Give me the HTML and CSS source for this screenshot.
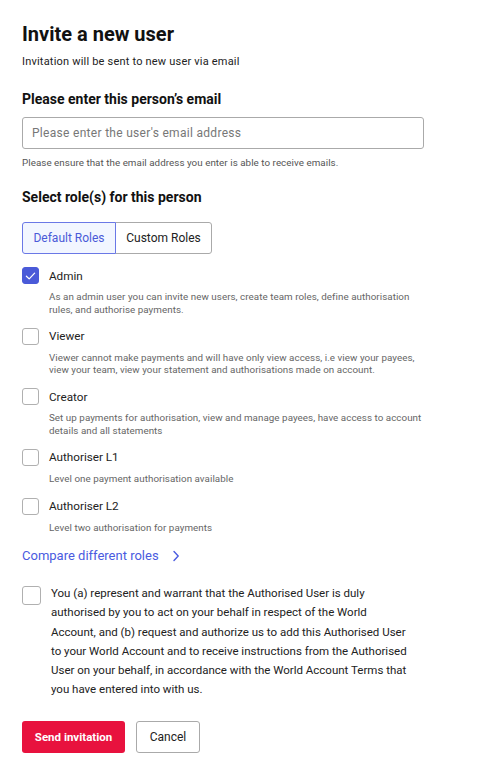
FILE: index.html
```html
<!DOCTYPE html>
<html>
<head>
<meta charset="utf-8">
<link rel="stylesheet" href="styles.css">
</head>
<body>
<main class="page">
  <h1 class="title">Invite a new user</h1>
  <p class="subtitle">Invitation will be sent to new user via email</p>

  <h2 class="section-label">Please enter this person’s email</h2>
  <div class="input-box"><span class="placeholder">Please enter the user's email address</span></div>
  <p class="helper">Please ensure that the email address you enter is able to receive emails.</p>

  <h2 class="section-label roles-label">Select role(s) for this person</h2>
  <div class="tabs">
    <div class="tab tab-active">Default Roles</div>
    <div class="tab">Custom Roles</div>
  </div>

  <ul class="roles">
    <li class="role">
      <div class="role-head">
        <span class="check checked"><svg viewBox="0 0 16 16" width="16" height="16"><path d="M3.6 8.2 L6.6 11.1 L12.4 5" fill="none" stroke="#fff" stroke-width="1.3" stroke-linecap="round" stroke-linejoin="round"/></svg></span>
        <span class="role-name">Admin</span>
      </div>
      <p class="role-desc">As an admin user you can invite new users, create team roles, define authorisation rules, and authorise payments.</p>
    </li>
    <li class="role">
      <div class="role-head"><span class="check"></span><span class="role-name">Viewer</span></div>
      <p class="role-desc">Viewer cannot make payments and will have only view access, i.e view your payees, view your team, view your statement and authorisations made on account.</p>
    </li>
    <li class="role">
      <div class="role-head"><span class="check"></span><span class="role-name">Creator</span></div>
      <p class="role-desc">Set up payments for authorisation, view and manage payees, have access to account details and all statements</p>
    </li>
    <li class="role">
      <div class="role-head"><span class="check"></span><span class="role-name">Authoriser L1</span></div>
      <p class="role-desc">Level one payment authorisation available</p>
    </li>
    <li class="role">
      <div class="role-head"><span class="check"></span><span class="role-name">Authoriser L2</span></div>
      <p class="role-desc">Level two authorisation for payments</p>
    </li>
  </ul>

  <a class="compare" href="#">Compare different roles <svg class="chev" viewBox="0 0 10 12" width="10" height="12"><path d="M3 1.5 L7.2 6 L3 10.5" fill="none" stroke="#4a5be0" stroke-width="1.4" stroke-linecap="round" stroke-linejoin="round"/></svg></a>

  <div class="consent">
    <span class="check big"></span>
    <p class="consent-text">You (a) represent and warrant that the Authorised User is duly authorised by you to act on your behalf in respect of the World Account, and (b) request and authorize us to add this Authorised User to your World Account and to receive instructions from the Authorised User on your behalf, in accordance with the World Account Terms that you have entered into with us.</p>
  </div>

  <div class="actions">
    <button class="btn btn-primary">Send invitation</button>
    <button class="btn btn-secondary">Cancel</button>
  </div>
</main>
</body>
</html>
```
FILE: styles.css
```css
* { box-sizing: border-box; }
html, body { margin: 0; padding: 0; background: #fff; }
body { font-family: Roboto, "Liberation Sans", sans-serif; color: #1a1a1a; }
.page { width: 504px; padding: 20px 22px 0 22px; }
.title { font-size: 20px; font-weight: 700; line-height: 28px; margin: 0; color: #111; }
.subtitle { font-size: 11px; line-height: 14px; margin: 7px 0 0 0; color: #222; letter-spacing: 0.2px; }
.section-label { font-size: 14px; font-weight: 700; line-height: 18px; margin: 21px 0 0 0; color: #111; }
.roles-label { margin-top: 19px; }
.input-box { width: 402px; height: 32px; border: 1px solid #aaa; border-radius: 3px; margin-top: 9px; display: flex; align-items: center; padding-left: 9px; }
.placeholder { font-size: 12px; letter-spacing: 0.3px; color: #777; }
.helper { font-size: 9.8px; line-height: 12px; color: #555; margin: 8px 0 0 0; letter-spacing: 0.05px; }
.tabs { display: flex; margin-top: 16px; }
.tab { height: 32px; display: flex; align-items: center; justify-content: center; font-size: 12px; border: 1px solid #aaa; color: #222; }
.tab-active { width: 94px; background: #f2f6ff; border-color: #6a78e6; color: #4a5ad8; border-radius: 3px 0 0 3px; position: relative; z-index: 1; }
.tab + .tab { width: 97px; margin-left: -1px; border-radius: 0 3px 3px 0; }
.roles { list-style: none; margin: 13px 0 0 0; padding: 0; }
.role { margin-bottom: 11.5px; }
.role:nth-child(n+4) { margin-bottom: 12.5px; }
.role:last-child { margin-bottom: 11px; }
.role-head { display: flex; align-items: center; gap: 10px; height: 17px; }
.check { width: 17px; height: 17px; border: 1px solid #b0b0b0; border-radius: 3px; flex: none; display: flex; align-items: center; justify-content: center; background: #fff; }
.check.checked { background: #4a5ad8; border-color: #4a5ad8; }
.role-name { font-size: 11.7px; color: #222; }
.role-desc { margin: 7px 0 0 27px; width: 376px; font-size: 9.8px; line-height: 12.5px; color: #666; letter-spacing: 0.05px; }
.compare { display: inline-flex; align-items: center; gap: 12px; font-size: 13px; color: #4a5be0; text-decoration: none; margin-top: 0; }
.consent { display: flex; gap: 10px; margin-top: 22px; }
.check.big { width: 19px; height: 19px; margin-top: 0; border-radius: 3px; }
.consent-text { margin: -2px 0 0 0; font-size: 11.5px; line-height: 19.3px; color: #222; width: 360px; }
.actions { display: flex; gap: 11px; margin-top: 21px; }
.btn { height: 32px; border-radius: 3px; font-family: Roboto, "Liberation Sans", sans-serif; font-size: 12px; padding: 0; cursor: pointer; }
.btn-primary { width: 103px; background: #e8123e; color: #fff; border: none; font-weight: 700; font-size: 11.5px; }
.btn-secondary { width: 64px; background: #fff; border: 1px solid #aaa; color: #222; }
```
